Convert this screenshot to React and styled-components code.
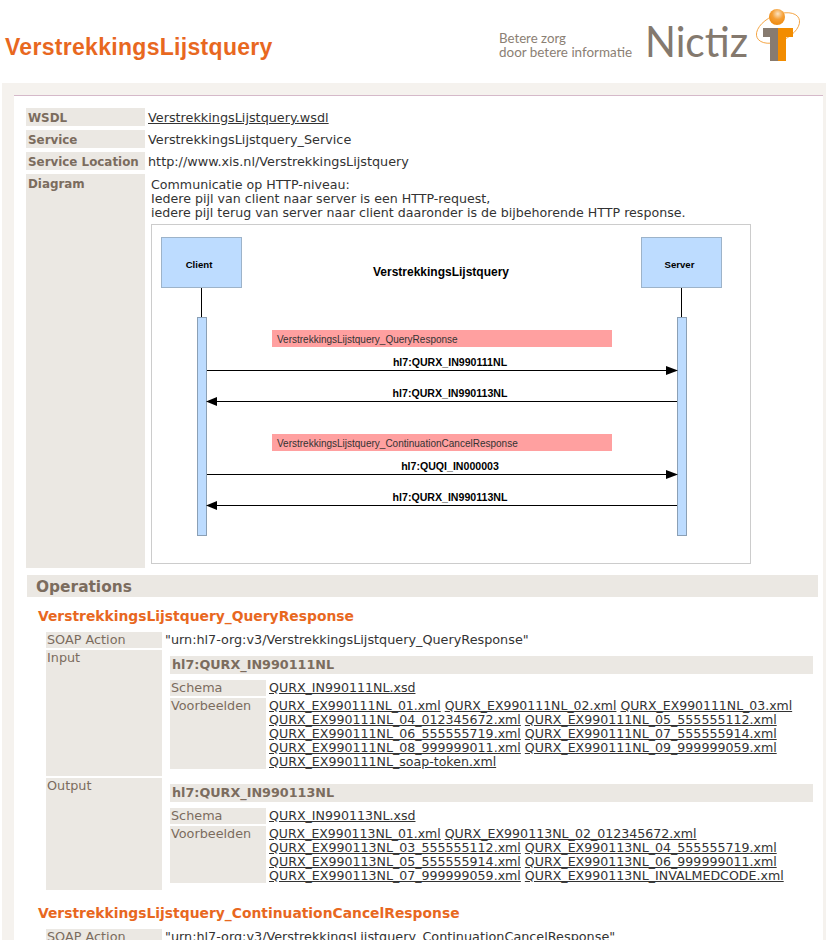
import React from "react";
import styled, { createGlobalStyle } from "styled-components";

const Global = createGlobalStyle`
  html, body { margin: 0; padding: 0; background: #fff; overflow: hidden; height: 940px; }
  body { font-family: "DejaVu Sans", Verdana, sans-serif; font-size: 12.8px; color: #333; }
`;

const Header = styled.header`
  height: 83px;
  display: flex;
  align-items: flex-start;
  justify-content: space-between;
  padding-left: 5px;
`;

const Title = styled.h1`
  margin: 35px 0 0;
  font: bold 23px/24px "Liberation Sans", Arial, sans-serif;
  color: #e8681f;
  letter-spacing: 0.3px;
`;

const Panel = styled.main`
  margin-left: 2px;
  background: #f5f2ee;
  padding: 12px 3px 0 12px;
`;

const Inner = styled.div`
  background: #fff;
  border-top: 1px solid #d5b9c9;
  padding: 12px 5px 0 12px;
`;

const InfoRow = styled.div`
  display: grid;
  grid-template-columns: 119px 1fr;
  column-gap: 3px;
  margin-bottom: 4px;
`;

const InfoLabel = styled.div`
  background: #ebe8e3;
  color: #7b6c5e;
  font-weight: bold;
  font-size: 11.9px;
  line-height: 16px;
  padding: 2px 0 0 2px;
  white-space: nowrap;
`;

const InfoValue = styled.div`
  line-height: 17px;
  padding-top: 1px;
  white-space: nowrap;
`;

const SoapValue = styled.div`
  white-space: nowrap;
`;

const Link = styled.a`
  color: #333;
  text-decoration: underline;
`;

const FileLink = styled(Link)`
  font-size: ${(p) => (p.$short ? "12.48px" : "12.6px")};
`;

const DiagramBody = styled.div`
  padding: 4px 0 4px 3px;
  line-height: 14px;
  font-size: 12.64px;
  white-space: nowrap;
`;

const DiagramBox = styled.div`
  width: 598px;
  height: 338px;
  margin-top: 4px;
  border: 1px solid #ccc;
`;

const SectionBar = styled.h2`
  margin: 7px 0 0 1px;
  height: 22px;
  background: #ebe8e3;
  color: #7b6c5e;
  font: bold 15.4px/24px "DejaVu Sans", Verdana, sans-serif;
  padding-left: 9px;
`;

const OpTitle = styled.h3`
  margin: ${(p) => (p.$first ? "11px" : "15px")} 0 7px 12px;
  color: #e8681f;
  font: bold 13.87px/17px "DejaVu Sans", Verdana, sans-serif;
  white-space: nowrap;
`;

const OpRow = styled.div`
  display: grid;
  grid-template-columns: 116px 1fr;
  column-gap: 3px;
  margin: 0 5px 2px 20px;
  line-height: 16px;
`;

const OpLabel = styled.div`
  background: #ebe8e3;
  color: #7b6c5e;
  padding-left: 1px;
`;

const MessageBox = styled.div`
  padding: 6px 0 5px 5px;
`;

const MessageTitle = styled.h4`
  margin: 0 0 6px;
  height: 18px;
  background: #ebe8e3;
  color: #7b6c5e;
  font: bold 12.75px/18px "DejaVu Sans", Verdana, sans-serif;
  padding-left: 2px;
`;

const MessageRow = styled.div`
  display: grid;
  grid-template-columns: 96px 1fr;
  column-gap: 3px;
  margin-bottom: 2px;
  line-height: 14px;
`;

const MessageLabel = styled.div`
  background: #ebe8e3;
  color: #7b6c5e;
  padding: 1px 0 1px 1px;
`;

const Files = styled.div`
  padding-top: 1px;
  font-size: 12.48px;
`;

const FileLine = styled.div`
  white-space: nowrap;
`;

function Logo() {
  return (
    <svg width="320" height="70" viewBox="0 0 320 70" style={{ marginTop: 7, marginRight: 7 }}>
      <g fontFamily="Lato, 'Open Sans', sans-serif" fill="#8b8074">
        <text x="0" y="36" fontSize="13.5" textLength="67" lengthAdjust="spacingAndGlyphs">Betere zorg</text>
        <text x="0" y="50" fontSize="13.5" textLength="133" lengthAdjust="spacingAndGlyphs">door betere informatie</text>
        <text x="146" y="50" fontSize="43" fill="#84796e" textLength="103" lengthAdjust="spacingAndGlyphs">Nictiz</text>
      </g>
      <ellipse cx="279" cy="21" rx="23" ry="13" fill="none" stroke="#f39a2e" strokeWidth="0.8" transform="rotate(-25 279 21)" />
      <defs>
        <radialGradient id="ball" cx="0.55" cy="0.3" r="0.7">
          <stop offset="0" stopColor="#fbe3c2" />
          <stop offset="0.5" stopColor="#f59f35" />
          <stop offset="1" stopColor="#ee8a10" />
        </radialGradient>
      </defs>
      <circle cx="278" cy="10" r="8" fill="url(#ball)" />
      <path d="M264 21h15v33h-8V30h-7z" fill="#877b70" />
      <path d="M279 21h15v9h-7v24h-8z" fill="#f28c00" />
    </svg>
  );
}

const Arrow = ({ y, label, toServer }) => (
  <g>
    <line x1={toServer ? 55 : 64} x2={toServer ? 518 : 525} y1={y} y2={y} stroke="#000" strokeWidth="1" />
    {toServer ? (
      <polygon points={`514,${y - 4.5} 526,${y} 514,${y + 4.5}`} fill="#000" />
    ) : (
      <polygon points={`65,${y - 4.5} 54,${y} 65,${y + 4.5}`} fill="#000" />
    )}
    <text x="298" y={y - 5} fontSize="10.6" fontWeight="bold" textAnchor="middle">{label}</text>
  </g>
);

function Diagram() {
  return (
    <DiagramBox>
      <svg width="598" height="338" viewBox="0 0 598 338" fontFamily="'Liberation Sans', Arial, sans-serif">
        <line x1="49.5" x2="49.5" y1="62" y2="93" stroke="#000" />
        <line x1="529.5" x2="529.5" y1="62" y2="93" stroke="#000" />
        <rect x="9.5" y="12.5" width="80" height="50" fill="#bddcff" stroke="#9db3c9" />
        <rect x="489.5" y="12.5" width="80" height="50" fill="#bddcff" stroke="#9db3c9" />
        <text x="47" y="43" fontSize="9.6" fontWeight="bold" textAnchor="middle">Client</text>
        <text x="527.5" y="43" fontSize="9.6" fontWeight="bold" textAnchor="middle">Server</text>
        <text x="289" y="51" fontSize="12" fontWeight="bold" textAnchor="middle">VerstrekkingsLijstquery</text>
        <rect x="45.5" y="92.5" width="9" height="218" fill="#bddcff" stroke="#8ba0b5" />
        <rect x="525.5" y="92.5" width="9" height="218" fill="#bddcff" stroke="#8ba0b5" />
        <rect x="120" y="105" width="340" height="17" fill="#ffa0a0" />
        <text x="125" y="118" fontSize="10" fill="#333">VerstrekkingsLijstquery_QueryResponse</text>
        <rect x="120" y="209" width="340" height="17" fill="#ffa0a0" />
        <text x="125" y="222" fontSize="10" fill="#333">VerstrekkingsLijstquery_ContinuationCancelResponse</text>
        <Arrow y={145.5} label="hl7:QURX_IN990111NL" toServer />
        <Arrow y={176.5} label="hl7:QURX_IN990113NL" />
        <Arrow y={249.5} label="hl7:QUQI_IN000003" toServer />
        <Arrow y={280.5} label="hl7:QURX_IN990113NL" />
      </svg>
    </DiagramBox>
  );
}

const inputLines = [
  ["QURX_EX990111NL_01.xml", "QURX_EX990111NL_02.xml", "QURX_EX990111NL_03.xml"],
  ["QURX_EX990111NL_04_012345672.xml", "QURX_EX990111NL_05_555555112.xml"],
  ["QURX_EX990111NL_06_555555719.xml", "QURX_EX990111NL_07_555555914.xml"],
  ["QURX_EX990111NL_08_999999011.xml", "QURX_EX990111NL_09_999999059.xml"],
  ["QURX_EX990111NL_soap-token.xml"],
];

const outputLines = [
  ["QURX_EX990113NL_01.xml", "QURX_EX990113NL_02_012345672.xml"],
  ["QURX_EX990113NL_03_555555112.xml", "QURX_EX990113NL_04_555555719.xml"],
  ["QURX_EX990113NL_05_555555914.xml", "QURX_EX990113NL_06_999999011.xml"],
  ["QURX_EX990113NL_07_999999059.xml", "QURX_EX990113NL_INVALMEDCODE.xml"],
];

function Message({ name, schema, lines }) {
  return (
    <MessageBox>
      <MessageTitle>{name}</MessageTitle>
      <MessageRow>
        <MessageLabel>Schema</MessageLabel>
        <Files><FileLink href="#">{schema}</FileLink></Files>
      </MessageRow>
      <MessageRow>
        <MessageLabel>Voorbeelden</MessageLabel>
        <Files>
          {lines.map((line) => (
            <FileLine key={line[0]}>
              {line.map((f, i) => (
                <React.Fragment key={f}>
                  {i > 0 && " "}
                  <FileLink href="#" $short={f.length === 22}>{f}</FileLink>
                </React.Fragment>
              ))}
            </FileLine>
          ))}
        </Files>
      </MessageRow>
    </MessageBox>
  );
}

export default function App() {
  return (
    <>
      <Global />
      <Header>
        <Title>VerstrekkingsLijstquery</Title>
        <Logo />
      </Header>
      <Panel>
        <Inner>
          <InfoRow>
            <InfoLabel>WSDL</InfoLabel>
            <InfoValue><Link href="#">VerstrekkingsLijstquery.wsdl</Link></InfoValue>
          </InfoRow>
          <InfoRow>
            <InfoLabel>Service</InfoLabel>
            <InfoValue>VerstrekkingsLijstquery_Service</InfoValue>
          </InfoRow>
          <InfoRow>
            <InfoLabel>Service Location</InfoLabel>
            <InfoValue>http://www.xis.nl/VerstrekkingsLijstquery</InfoValue>
          </InfoRow>
          <InfoRow>
            <InfoLabel>Diagram</InfoLabel>
            <DiagramBody>
              Communicatie op HTTP-niveau:<br />
              Iedere pijl van client naar server is een HTTP-request,<br />
              iedere pijl terug van server naar client daaronder is de bijbehorende HTTP response.
              <Diagram />
            </DiagramBody>
          </InfoRow>

          <SectionBar>Operations</SectionBar>

          <OpTitle $first>VerstrekkingsLijstquery_QueryResponse</OpTitle>
          <OpRow>
            <OpLabel>SOAP Action</OpLabel>
            <SoapValue>"urn:hl7-org:v3/VerstrekkingsLijstquery_QueryResponse"</SoapValue>
          </OpRow>
          <OpRow>
            <OpLabel>Input</OpLabel>
            <Message name="hl7:QURX_IN990111NL" schema="QURX_IN990111NL.xsd" lines={inputLines} />
          </OpRow>
          <OpRow>
            <OpLabel>Output</OpLabel>
            <Message name="hl7:QURX_IN990113NL" schema="QURX_IN990113NL.xsd" lines={outputLines} />
          </OpRow>

          <OpTitle>VerstrekkingsLijstquery_ContinuationCancelResponse</OpTitle>
          <OpRow>
            <OpLabel>SOAP Action</OpLabel>
            <SoapValue>"urn:hl7-org:v3/VerstrekkingsLijstquery_ContinuationCancelResponse"</SoapValue>
          </OpRow>
        </Inner>
      </Panel>
    </>
  );
}
